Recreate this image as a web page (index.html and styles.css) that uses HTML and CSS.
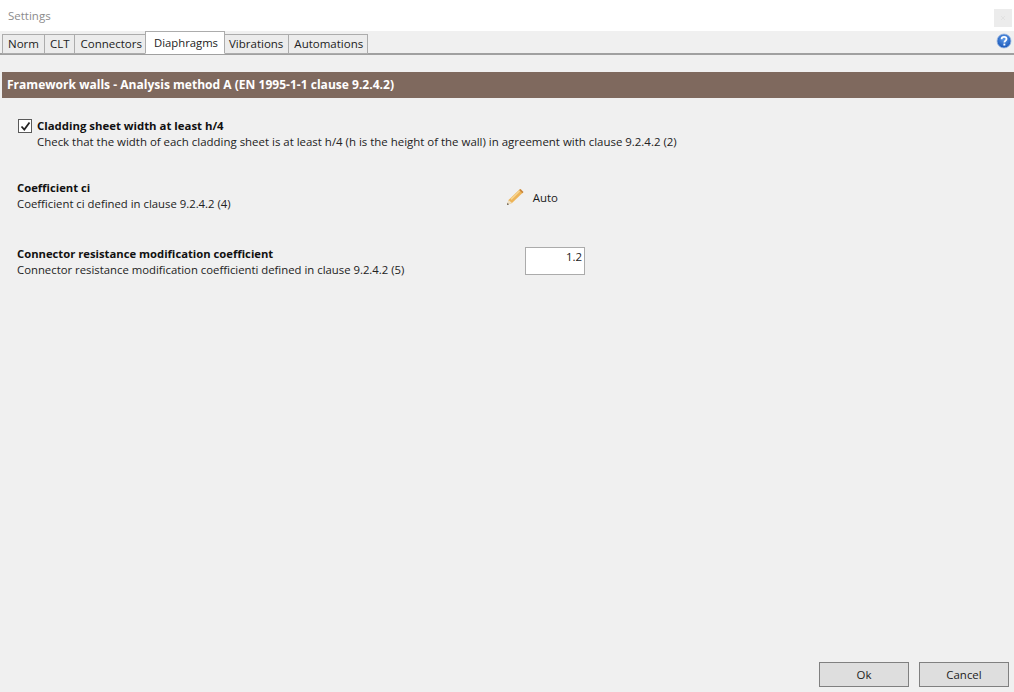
FILE: index.html
```html
<!DOCTYPE html>
<html lang="en">
<head>
<meta charset="utf-8">
<title>Settings</title>
<link rel="stylesheet" href="styles.css">
</head>
<body>
<div class="window">
  <header class="titlebar">
    <span class="title">Settings</span>
    <span class="close"><svg width="6" height="6" viewBox="0 0 6 6"><path d="M1 1l4 4M5 1l-4 4" stroke="#e2e2e2" stroke-width="1"/></svg></span>
  </header>
  <nav class="tabbar">
    <span class="tab tab-norm">Norm</span>
    <span class="tab">CLT</span>
    <span class="tab tab-conn">Connectors</span>
    <span class="tab active">Diaphragms</span>
    <span class="tab tab-vib">Vibrations</span>
    <span class="tab">Automations</span>
    <svg class="help" width="16" height="16" viewBox="0 0 16 16">
      <defs><radialGradient id="h" cx="50%" cy="35%" r="70%"><stop offset="0" stop-color="#5f9be8"/><stop offset="1" stop-color="#1250b4"/></radialGradient></defs>
      <circle cx="8" cy="8" r="7" fill="url(#h)" stroke="#9db9e2" stroke-width="0.8"/>
      <path d="M5.6 6.2c0-1.5 1.1-2.3 2.5-2.3s2.4.8 2.4 2c0 1.800-2.100 1.800-2.100 3.500" fill="none" stroke="#fff" stroke-width="1.800"/>
      <rect x="7.400" y="10.600" width="1.900" height="1.900" fill="#fff"/>
    </svg>
  </nav>
  <main class="content">
    <h2 class="banner">Framework walls - Analysis method A (EN 1995-1-1 clause 9.2.4.2)</h2>
    <section class="check-row">
      <span class="checkbox"><svg width="11" height="11" viewBox="0 0 11 11"><path d="M1.500 5.500l2.800 3 5.200-7" fill="none" stroke="#222" stroke-width="1.800"/></svg></span>
      <div class="text">
        <div class="label label-check">Cladding sheet width at least h/4</div>
        <div class="desc">Check that the width of each cladding sheet is at least h/4 (h is the height of the wall) in agreement with clause 9.2.4.2 (2)</div>
      </div>
    </section>
    <section class="row row-ci">
      <div class="text">
        <div class="label">Coefficient ci</div>
        <div class="desc desc-small">Coefficient ci defined in clause 9.2.4.2 (4)</div>
      </div>
      <div class="auto">
        <svg width="18" height="18" viewBox="0 0 18 18">
          <path d="M1 17l1.500-5L13.500 1.500 17 4.500 6 15z" fill="#edb458"/>
          <path d="M4.500 10.500L14.500 1l1 1L5.500 12z" fill="#f6d490"/>
          <path d="M13 2l3.500 3.200 1-1.200L14.500 1z" fill="#c9863a"/>
          <path d="M1 17l1.500-5 3.500 3z" fill="#efe0c4"/>
          <path d="M1 17l.6-2 1.400 1.300z" fill="#444"/>
        </svg>
        <span>Auto</span>
      </div>
    </section>
    <section class="row row-conn">
      <div class="text">
        <div class="label">Connector resistance modification coefficient</div>
        <div class="desc desc-small">Connector resistance modification coefficienti defined in clause 9.2.4.2 (5)</div>
      </div>
      <div class="input">1.2</div>
    </section>
  </main>
  <footer class="actions">
    <span class="btn">Ok</span>
    <span class="btn">Cancel</span>
  </footer>
</div>
</body>
</html>
```
FILE: styles.css
```css
html, body { margin: 0; padding: 0; }
body {
  width: 1014px;
  height: 692px;
  overflow: hidden;
  font-family: "Open Sans", "Noto Sans", sans-serif;
  font-size: 11.45px;
  color: #1a1a1a;
  background: #f0f0f0;
}
.window { display: flex; flex-direction: column; height: 692px; }
.titlebar {
  height: 31px;
  flex: none;
  box-sizing: border-box;
  background: #fff;
  display: flex;
  align-items: center;
  justify-content: space-between;
  padding: 0 2px 0 8px;
}
.title { color: #8c8c8c; font-size: 11.5px; }
.close {
  width: 18px;
  height: 18px;
  margin-top: 4px;
  background: #ececec;
  display: flex;
  align-items: center;
  justify-content: center;
}
.tabbar {
  height: 24px;
  flex: none;
  box-sizing: border-box;
  display: flex;
  align-items: flex-end;
  padding-left: 2px;
  border-bottom: 2px solid #a0a0a0;
  background: #f0f0f0;
}
.tab {
  height: 20px;
  box-sizing: border-box;
  padding: 0 4px 2px 5px;
  margin-bottom: -1px;
  display: flex;
  align-items: center;
  background: #ececec;
  border: 1px solid #acacac;
  margin-left: -1px;
  color: #222;
  font-size: 11.5px;
  white-space: nowrap;
}
.tab.tab-norm { margin-left: 0; padding: 0 5px 2px 5px; }
.tab.tab-conn { padding: 0 3px 2px 6px; }
.tab.tab-vib { padding: 0 5px 2px 4px; }
.tab.active {
  height: 23px;
  padding: 0 6px 1px 8px;
  font-size: 11.3px;
  background: #fff;
  border-bottom-color: #fff;
  position: relative;
}
.help { margin-left: auto; margin-right: 2px; align-self: center; margin-top: -2px; }
.content { flex: 1; display: flex; flex-direction: column; padding: 17px 0 0 2px; }
.banner {
  margin: 0 0 20px;
  height: 26px;
  box-sizing: border-box;
  padding-left: 5px;
  line-height: 26px;
  background: #7f695e;
  color: #fff;
  font-size: 12.06px;
  font-weight: 700;
}
.check-row { display: flex; gap: 4px; padding-left: 16px; }
.checkbox {
  width: 14px;
  height: 14px;
  box-sizing: border-box;
  margin-top: 1px;
  border: 1px solid #5a5a5a;
  background: #fff;
  display: flex;
  align-items: center;
  justify-content: center;
  flex: none;
}
.check-row .text { margin-left: 1px; }
.label { font-weight: 700; font-size: 11.25px; line-height: 16px; color: #111; }
.label-check { font-size: 11.38px; }
.desc { line-height: 16px; color: #222; }
.desc-small { font-size: 11.34px; }
.row { display: flex; padding-left: 15px; position: relative; }
.row-ci { margin-top: 30px; }
.row-conn { margin-top: 34px; }
.auto {
  margin-left: auto;
  margin-right: 456px;
  display: flex;
  align-items: center;
  gap: 9px;
  height: 20px;
  margin-top: 7px;
}
.input {
  margin-left: auto;
  margin-right: 429px;
  width: 60px;
  height: 28px;
  box-sizing: border-box;
  background: #fff;
  border: 1px solid #ababab;
  text-align: right;
  padding: 0 2px;
  line-height: 18px;
  margin-top: 1px;
  color: #222;
}
.actions {
  flex: none;
  display: flex;
  justify-content: flex-end;
  gap: 10px;
  padding: 0 5px 5px 0;
}
.btn {
  width: 90px;
  height: 25px;
  box-sizing: border-box;
  border: 1px solid #808080;
  background: #dedede;
  display: flex;
  align-items: center;
  justify-content: center;
  color: #222;
}
```
